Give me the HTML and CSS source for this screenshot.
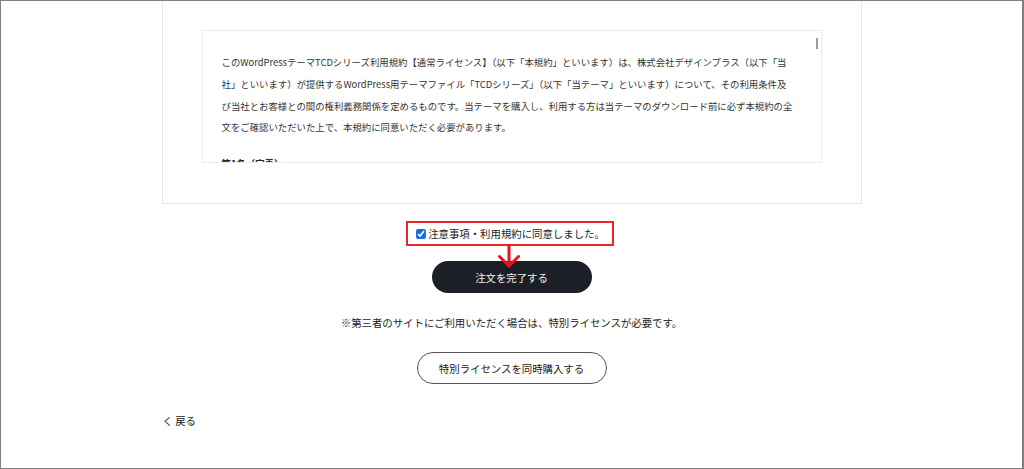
FILE: index.html
```html
<!DOCTYPE html>
<html lang="ja">
<head>
<meta charset="utf-8">
<title>注文確認</title>
<link rel="stylesheet" href="styles.css">
</head>
<body>
<div class="frame">
  <div class="card">
    <div class="terms">
      <p class="terms-text">このWordPressテーマTCDシリーズ利用規約【通常ライセンス】（以下「本規約」といいます）は、株式会社デザインプラス（以下「当<br>社」といいます）が提供するWordPress用テーマファイル「TCDシリーズ」（以下「当テーマ」といいます）について、その利用条件及<br>び当社とお客様との間の権利義務関係を定めるものです。当テーマを購入し、利用する方は当テーマのダウンロード前に必ず本規約の全<br>文をご確認いただいた上で、本規約に同意いただく必要があります。</p>
      <h3 class="terms-head">第1条（定義）</h3>
      <span class="thumb"></span>
    </div>
  </div>
  <div class="agree-wrap">
    <label class="agree"><input type="checkbox" class="agree-check" checked>注意事項・利用規約に同意しました。</label>
    <svg class="arrow" width="24" height="24" viewBox="0 0 24 24"><path d="M12 0 V21 M2.5 11.5 L12 21 L21.5 11.5" fill="none" stroke="#e8141b" stroke-width="3" stroke-linecap="round" stroke-linejoin="round"/></svg>
  </div>
  <button class="submit">注文を完了する</button>
  <p class="note">※第三者のサイトにご利用いただく場合は、特別ライセンスが必要です。</p>
  <button class="special">特別ライセンスを同時購入する</button>
  <div class="back-row"><a class="back">く 戻る</a></div>
</div>
</body>
</html>
```

FILE: styles.css
```css
html, body {
  margin: 0;
  padding: 0;
  background: #fff;
}
body {
  font-family: "Noto Sans CJK JP", "Noto Sans", sans-serif;
  color: #222;
}
.frame {
  box-sizing: border-box;
  width: 1024px;
  height: 469px;
  border: 1px solid #808080;
  border-right-width: 2px;
  display: flex;
  flex-direction: column;
  align-items: center;
  overflow: hidden;
}
.card {
  box-sizing: border-box;
  width: 700px;
  border: 1px solid #e6e6e6;
  border-top: 0;
  padding: 29px 39px 40px;
}
.terms {
  position: relative;
  box-sizing: border-box;
  height: 133px;
  border: 1px solid #ebebeb;
  padding: 21px 19px 0;
  overflow: hidden;
}
.terms-text {
  margin: 0;
  font-size: 9.4px;
  line-height: 21.8px;
  color: #333;
  white-space: nowrap;
}
.terms-head {
  margin: 14px 0 0;
  font-size: 9.4px;
  line-height: 21.8px;
  font-weight: bold;
  color: #222;
}
.thumb {
  position: absolute;
  right: 3px;
  top: 7px;
  width: 2px;
  height: 11px;
  background: #9a9a9a;
}
.agree-wrap {
  position: relative;
  margin-top: 17px;
  margin-right: 3px;
}
.agree {
  box-sizing: border-box;
  display: flex;
  align-items: center;
  height: 25px;
  border: 2px solid #e8262c;
  padding: 0 7px 0 8px;
  font-size: 10.4px;
  line-height: 16px;
  color: #222;
}
.agree-check {
  width: 10px;
  height: 10px;
  margin: 0 2px 0 0;
  accent-color: #1a6fe0;
}
.arrow {
  position: absolute;
  left: 91px;
  top: 24px;
}
.submit {
  margin-top: 15px;
  width: 160px;
  height: 32px;
  border: 0;
  border-radius: 16px;
  background: #1c1f26;
  color: #f2f2f2;
  font-family: inherit;
  font-size: 10.4px;
  padding: 0;
}
.note {
  margin: 22px 0 0;
  font-size: 10.4px;
  line-height: 16px;
  color: #222;
}
.special {
  margin-top: 21px;
  width: 190px;
  height: 32px;
  border: 1px solid #555;
  border-radius: 16px;
  background: #fff;
  color: #222;
  font-family: inherit;
  font-size: 10.4px;
  padding: 0;
}
.back-row {
  width: 700px;
  margin-top: 29px;
  font-size: 10.4px;
  line-height: 16px;
}
.back {
  color: #222;
  padding-left: 1px;
}
```
